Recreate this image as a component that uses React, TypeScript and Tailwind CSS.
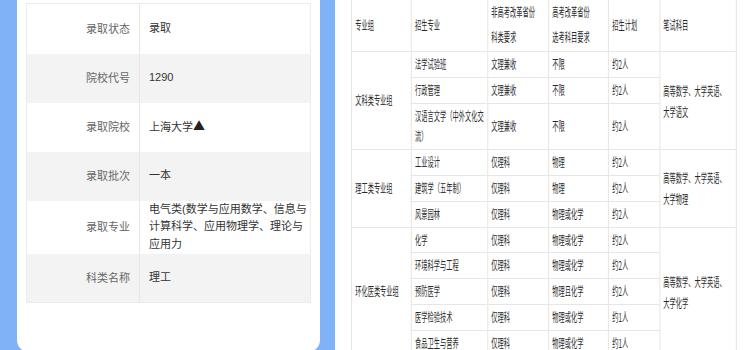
const info: { label: string; value: string[]; h: string }[] = [
  { label: "录取状态", value: ["录取"], h: "h-[50px]" },
  { label: "院校代号", value: ["1290"], h: "h-[49px]" },
  { label: "录取院校", value: ["上海大学▲"], h: "h-[49px]" },
  { label: "录取批次", value: ["一本"], h: "h-[49px]" },
  {
    label: "录取专业",
    value: ["电气类(数学与应用数学、信息与", "计算科学、应用物理学、理论与", "应用力"],
    h: "h-[53px]",
  },
  { label: "科类名称", value: ["理工"], h: "h-[49px]" },
];

type Item = [string[], string, string, string];

const groups: { name: string; exam: string[]; items: Item[] }[] = [
  {
    name: "文科类专业组",
    exam: ["高等数学、大学英语、", "大学语文"],
    items: [
      [["法学试验班"], "文理兼收", "不限", "约2人"],
      [["行政管理"], "文理兼收", "不限", "约2人"],
      [["汉语言文学（中外文化交", "流）"], "文理兼收", "不限", "约2人"],
    ],
  },
  {
    name: "理工类专业组",
    exam: ["高等数学、大学英语、", "大学物理"],
    items: [
      [["工业设计"], "仅理科", "物理", "约2人"],
      [["建筑学（五年制）"], "仅理科", "物理", "约2人"],
      [["风景园林"], "仅理科", "物理或化学", "约2人"],
    ],
  },
  {
    name: "环化医类专业组",
    exam: ["高等数学、大学英语、", "大学化学"],
    items: [
      [["化学"], "仅理科", "物理或化学", "约2人"],
      [["环境科学与工程"], "仅理科", "物理或化学", "约2人"],
      [["预防医学"], "仅理科", "物理且化学", "约2人"],
      [["医学检验技术"], "仅理科", "物理或化学", "约1人"],
      [["食品卫生与营养"], "仅理科", "物理或化学", "约1人"],
    ],
  },
];

const cell = "border-y border-x-2 border-[#e6e6e6] pl-[6px] pr-0 py-[2px] leading-[20.8px] align-middle text-left font-normal";
const head = "border-y border-x-2 border-[#e6e6e6] pl-[6px] pr-0 pt-0 pb-[2px] leading-[25px] align-middle text-left font-normal";

function Lines({ lines }: { lines: string[] }) {
  return (
    <>
      {lines.map((l) => (
        <div key={l} className="whitespace-nowrap">
          {l.endsWith("▲") ? (
            <>
              {l.slice(0, -1)}
              <span className="font-['Noto_Sans_CJK_SC',sans-serif] text-[12px] text-[#222]">▲</span>
            </>
          ) : (
            l
          )}
        </div>
      ))}
    </>
  );
}

export default function App() {
  return (
    <div className="flex h-[350px] w-[750px] overflow-hidden bg-white font-['Liberation_Sans','Noto_Sans_CJK_SC',sans-serif]">
      {/* left: admission result card */}
      <div className="w-[335px] shrink-0 bg-[#80b2f7] pl-[17px] pr-[15px]">
        <div className="h-[352px] rounded-b-[12px] bg-white px-[9px] pt-[3px]">
          <table className="w-full border-collapse border border-[#ececec] text-[11px]">
            <tbody>
              {info.map((r, i) => (
                <tr key={r.label} className={i % 2 ? "bg-[#f3f3f3]" : "bg-white"}>
                  <td className={`${r.h} w-[113px] border-r border-[#e6e6e6] pr-[9px] text-right text-[#666]`}>
                    {r.label}
                  </td>
                  <td className="pl-[9px] leading-[17.5px] text-[#333]">
                    <Lines lines={r.value} />
                  </td>
                </tr>
              ))}
            </tbody>
          </table>
        </div>
      </div>

      {/* right: enrolment plan table */}
      <div className="ml-[16px] w-[386px] shrink-0 overflow-hidden">
        <div className="-mt-[2px] w-[742px] origin-top-left scale-x-[0.52]">
          <table className="w-full table-fixed border-collapse text-[12px] text-[#2a2a2a] font-['Noto_Sans_CJK_SC',sans-serif]">
            <colgroup>
              <col className="w-[115px]" />
              <col className="w-[146px]" />
              <col className="w-[117px]" />
              <col className="w-[115px]" />
              <col className="w-[98px]" />
              <col className="w-[147px]" />
            </colgroup>
            <thead>
              <tr>
                <th className={head}>专业组</th>
                <th className={head}>招生专业</th>
                <th className={head}>
                  <Lines lines={["非高考改革省份", "科类要求"]} />
                </th>
                <th className={head}>
                  <Lines lines={["高考改革省份", "选考科目要求"]} />
                </th>
                <th className={head}>招生计划</th>
                <th className={head}>笔试科目</th>
              </tr>
            </thead>
            <tbody>
              {groups.map((g) =>
                g.items.map((it, i) => (
                  <tr key={g.name + i}>
                    {i === 0 && (
                      <td rowSpan={g.items.length} className={cell}>
                        {g.name}
                      </td>
                    )}
                    <td className={cell}>
                      <Lines lines={it[0]} />
                    </td>
                    <td className={cell}>{it[1]}</td>
                    <td className={cell}>{it[2]}</td>
                    <td className={cell}>{it[3]}</td>
                    {i === 0 && (
                      <td rowSpan={g.items.length} className={`${cell} !leading-[21px]`}>
                        <Lines lines={g.exam} />
                      </td>
                    )}
                  </tr>
                ))
              )}
            </tbody>
          </table>
        </div>
      </div>
    </div>
  );
}
